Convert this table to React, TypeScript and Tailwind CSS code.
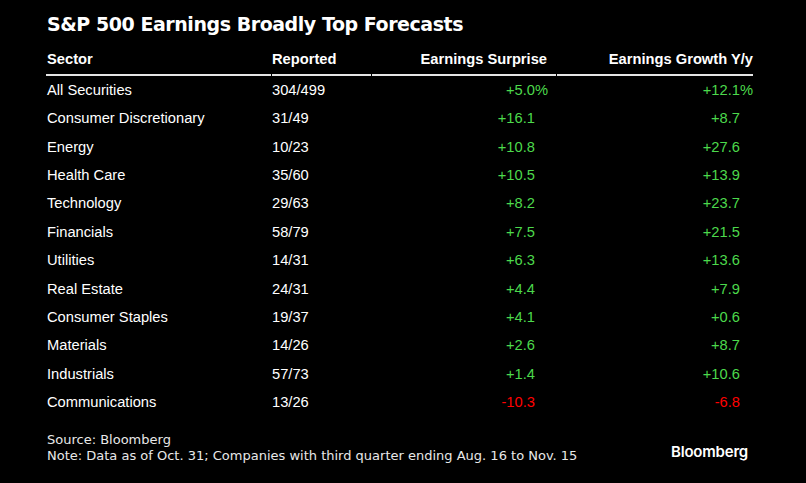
import React from 'react';

type Row = {
    sector: string;
    reported: string;
    surprise: string;
    growth: string;
    pct?: boolean;
};

const rows: Row[] = [
    { sector: 'All Securities', reported: '304/499', surprise: '+5.0', growth: '+12.1', pct: true },
    { sector: 'Consumer Discretionary', reported: '31/49', surprise: '+16.1', growth: '+8.7' },
    { sector: 'Energy', reported: '10/23', surprise: '+10.8', growth: '+27.6' },
    { sector: 'Health Care', reported: '35/60', surprise: '+10.5', growth: '+13.9' },
    { sector: 'Technology', reported: '29/63', surprise: '+8.2', growth: '+23.7' },
    { sector: 'Financials', reported: '58/79', surprise: '+7.5', growth: '+21.5' },
    { sector: 'Utilities', reported: '14/31', surprise: '+6.3', growth: '+13.6' },
    { sector: 'Real Estate', reported: '24/31', surprise: '+4.4', growth: '+7.9' },
    { sector: 'Consumer Staples', reported: '19/37', surprise: '+4.1', growth: '+0.6' },
    { sector: 'Materials', reported: '14/26', surprise: '+2.6', growth: '+8.7' },
    { sector: 'Industrials', reported: '57/73', surprise: '+1.4', growth: '+10.6' },
    { sector: 'Communications', reported: '13/26', surprise: '-10.3', growth: '-6.8' },
];

const Value = ({ v, pct }: { v: string; pct?: boolean }) => (
    <span className={v.startsWith('-') ? 'text-[#ff0000]' : 'text-[#4cd94c]'}>
        {v}
        <span className={pct ? '' : 'invisible'}>%</span>
    </span>
);

export default function App() {
    return (
        <div className="w-[806px] h-[483px] bg-black text-white overflow-hidden font-['Liberation_Sans',Arial,sans-serif]">
            <div className="pl-[46px] pt-[12px] w-[753px]">
                <h1 className="font-['DejaVu_Sans',Verdana,sans-serif] font-bold text-[19px] leading-[24px] tracking-[-0.45px] pl-px">
                    S&amp;P 500 Earnings Broadly Top Forecasts
                </h1>

                <div className="mt-[9px] text-[14.7px]">
                    <div className="grid grid-cols-[226px_100px_185px_196px] font-bold leading-[28.8px]">
                        <div className="pl-px border-b-2 border-[#e4e4e4] mr-px">Sector</div>
                        <div className="border-b-2 border-[#e4e4e4] mr-px">Reported</div>
                        <div className="text-right pr-[9px] border-b-2 border-[#e4e4e4] mr-px">Earnings Surprise</div>
                        <div className="text-right border-b-2 border-[#e4e4e4]">Earnings Growth Y/y</div>
                    </div>

                    {rows.map((r) => (
                        <div key={r.sector} className="grid grid-cols-[226px_100px_185px_196px] leading-[28.4px]">
                            <div className="pl-px">{r.sector}</div>
                            <div>{r.reported}</div>
                            <div className="text-right pr-[9px]">
                                <Value v={r.surprise} pct={r.pct} />
                            </div>
                            <div className="text-right">
                                <Value v={r.growth} pct={r.pct} />
                            </div>
                        </div>
                    ))}
                </div>

                <div className="mt-[15.6px] flex justify-between items-start">
                    <div className="font-['DejaVu_Sans',Tahoma,sans-serif] text-[13px] leading-[16px] text-[#e8e8e8] pl-px">
                        <div>Source: Bloomberg</div>
                        <div>Note: Data as of Oct. 31; Companies with third quarter ending Aug. 16 to Nov. 15</div>
                    </div>
                    <div className="font-['Inter',sans-serif] font-semibold text-[15px] leading-[20px] mt-[10px] pr-[5px] tracking-[-0.2px]">
                        Bloomberg
                    </div>
                </div>
            </div>
        </div>
    );
}
